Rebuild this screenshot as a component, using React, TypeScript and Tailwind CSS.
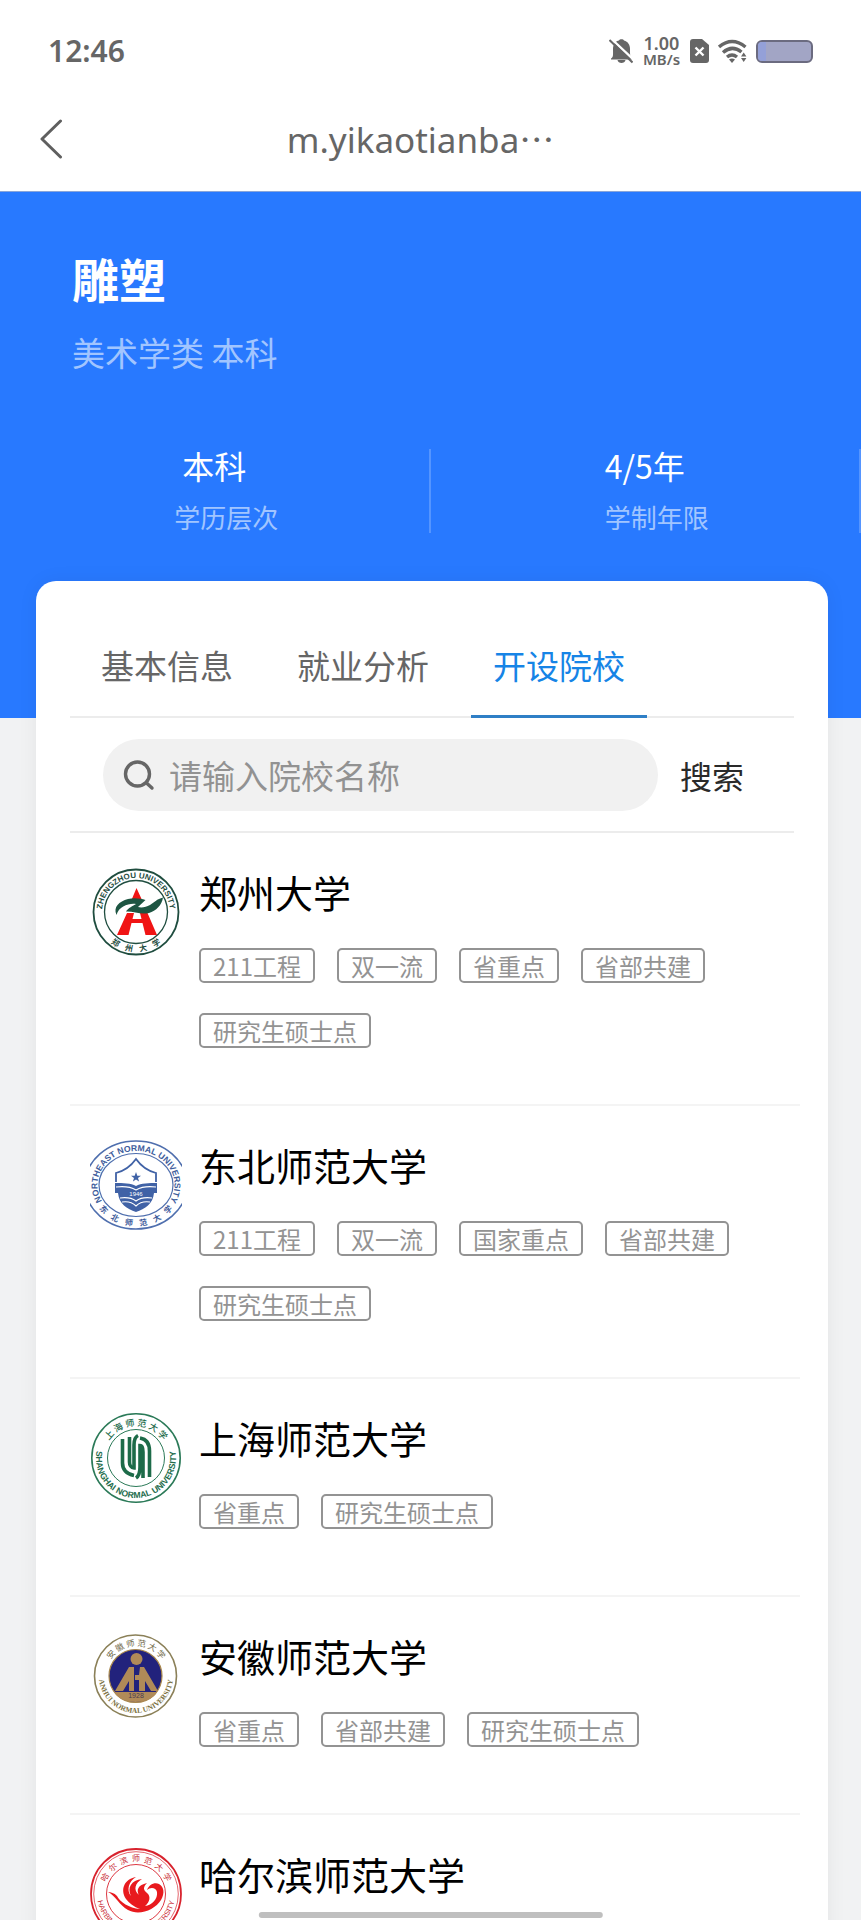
import type { ReactNode } from "react";

const cjk = "font-['Noto_Sans_CJK_SC',sans-serif]";

type ArcProps = {
  id: string;
  r: number;
  size: number;
  fill: string;
  children: string;
  bottom?: boolean;
  weight?: number;
  family?: string;
  ry?: number;
};

/* Text that runs along a circle centred in a 110-unit crest. */
function ArcText({ id, r, size, fill, children, bottom = false, weight = 400, family = "Liberation Sans, sans-serif", ry = r }: ArcProps) {
  const dx = r * 0.866;
  const dy = ry * 0.5;
  const d = bottom
    ? `M${55 - dx} ${55 - dy}A${r} ${ry} 0 1 0 ${55 + dx} ${55 - dy}`
    : `M${55 - dx} ${55 + dy}A${r} ${ry} 0 1 1 ${55 + dx} ${55 + dy}`;
  return (
    <>
      <path id={id} d={d} fill="none" />
      <text fontSize={size} fontWeight={weight} fill={fill} fontFamily={family} textAnchor="middle" className="whitespace-pre">
        <textPath href={`#${id}`} startOffset="50%">
          {children}
        </textPath>
      </text>
    </>
  );
}

function Crest({ label, children }: { label: string; children: ReactNode }) {
  return (
    <svg viewBox="9 9 92 92" className="size-[92px] shrink-0" role="img" aria-label={label}>
      {children}
    </svg>
  );
}

const kai = "Noto Sans CJK SC, sans-serif";

function ZhengzhouCrest() {
  return (
    <Crest label="郑州大学">
      <circle cx="55" cy="55" r="42.5" fill="#fff" stroke="#1f4d3f" strokeWidth="1.8" />
      <circle cx="55" cy="55" r="31.5" fill="none" stroke="#1f4d3f" strokeWidth="1.3" />
      <ArcText id="zz-en" r={34} size={8} weight={700} fill="#1f4d3f">ZHENGZHOU UNIVERSITY</ArcText>
      <ArcText id="zz-a" r={39.8} size={8} weight={700} fill="#1f4d3f" family={kai} bottom>郑    州    大    学</ArcText>
      <path d="M55.500 31L61 43H50.500ZM46 56H53L47.500 78H36ZM59 56H66.500L76 78H64.500ZM49 62H63V66H48Z" fill="#f01414" />
      <path d="M35.500 58C32 50 38 44.500 47 42C53 40.500 60 41.500 64.500 43L57 50C61 51 65 50 69 48C73 45.500 76 42 82 40.500C81 48 75 54 68 56C60 58 52 54 45 54.500C47 51 52 49 55 47C48 46 38 49 35.500 58Z" fill="#1d5542" />
    </Crest>
  );
}

function NortheastCrest() {
  return (
    <Crest label="东北师范大学">
      <ellipse cx="55" cy="55" rx="51" ry="44" fill="#fff" stroke="#4f6fae" strokeWidth="1.6" />
      <ellipse cx="55" cy="55" rx="37" ry="31.5" fill="none" stroke="#4f6fae" strokeWidth="1.2" />
      <ArcText id="ne-en" r={38.5} ry={34} size={8.6} weight={700} fill="#3d5c9b">NORTHEAST NORMAL UNIVERSITY</ArcText>
      <ArcText id="ne-a" r={45} ry={41} size={8} weight={700} fill="#3d5c9b" family={kai} bottom>东    北    师    范    大    学</ArcText>
      <path d="M35 52V43C43 41 50 36 55 29C60 36 67 41 75 43V52" fill="none" stroke="#4062a6" strokeWidth="1.8" />
      <path d="M55 42L56.300 45.800H60L57 48L58.100 51.500L55 49.400L51.900 51.500L53 48L50 45.800H53.700Z" fill="#4062a6" />
      <path d="M34 53C42 53 50 53 55 56C60 53 68 53 76 53V63H73C72 74 64 79 55 82C46 79 38 74 37 63H34Z" fill="#4062a6" />
      <path d="M35 57C43 56 50 57 55 60C60 57 67 56 75 57M39 68C46 67 51 68 55 71C59 68 64 67 71 68M41 72C47 71 52 73 55 76C58 73 63 71 69 72" fill="none" stroke="#fff" strokeWidth="1.1" />
      <text x="55" y="66" fontSize="6" fontFamily="Liberation Sans, sans-serif" fill="#fff" textAnchor="middle">1946</text>
    </Crest>
  );
}

function ShanghaiCrest() {
  return (
    <Crest label="上海师范大学">
      <circle cx="55" cy="55" r="44.2" fill="#fff" stroke="#2b7a58" strokeWidth="1.6" />
      <circle cx="55" cy="55" r="28.5" fill="none" stroke="#2b7a58" strokeWidth="1" />
      <ArcText id="sh-cn" r={32} size={9} weight={500} fill="#236c4c" family={kai}>上 海 师 范 大 学</ArcText>
      <ArcText id="sh-en" r={40} size={8.6} weight={700} fill="#236c4c" bottom>SHANGHAI NORMAL UNIVERSITY</ArcText>
      <path d="M41.500 36V60C41.500 67 46 71 53 72.500M48.500 34V59C48.500 62 50 65 53 65V42C53 37 54 34 57 32.500M68.500 74V48C68.500 40 65 36 59 35M62 75V49C62 45 61.500 42.500 59 42.500V64C59 69 58 73 55 75" fill="none" stroke="#1d6b49" strokeWidth="3.6" />
    </Crest>
  );
}

function AnhuiCrest() {
  return (
    <Crest label="安徽师范大学">
      <circle cx="54.5" cy="55" r="41" fill="#fff" stroke="#8b8058" strokeWidth="1.6" />
      <circle cx="54.5" cy="55" r="26.5" fill="#22227c" stroke="#a8874c" strokeWidth="1.2" />
      <ArcText id="ah-cn" r={30} size={8.4} fill="#6e6847" family={kai}>安 徽 师 范 大 学</ArcText>
      <ArcText id="ah-en" r={37} size={7.4} weight={700} fill="#7b7040" family="Liberation Serif, serif" bottom>ANHUI NORMAL UNIVERSITY</ArcText>
      <circle cx="55.5" cy="38" r="6" fill="#b08a58" />
      <path d="M48 46H53V70H48V60L42 70H34ZM59 46H63L77 70H70L64 60V70H58V59H54V54H58Z" fill="#b08a58" />
      <path d="M33 71H76C73 78 62 81 54.500 81C46 81 37 78 33 71Z" fill="#b08a58" />
      <text x="55" y="77" fontSize="7" fontFamily="Liberation Sans, sans-serif" fill="#4a3c50" textAnchor="middle">1928</text>
    </Crest>
  );
}

function HarbinCrest() {
  return (
    <Crest label="哈尔滨师范大学">
      <circle cx="55" cy="55" r="45" fill="#fff" stroke="#d8232e" strokeWidth="1.8" />
      <circle cx="55" cy="55" r="42.3" fill="none" stroke="#d8232e" strokeWidth="0.7" />
      <circle cx="55" cy="55" r="29.5" fill="none" stroke="#d8232e" strokeWidth="0.9" />
      <ArcText id="hb-cn" r={32.5} size={8} fill="#c92a34" family={kai}>哈  尔  滨  师  范  大  学</ArcText>
      <ArcText id="hb-en" r={39} size={7.4} fill="#c92a34" bottom>HARBIN NORMAL UNIVERSITY</ArcText>
      <path d="M27 53C34 56 38 66 47 71C58 77 74 71 80 61C84 54 83 48 78 45C73 43 68 46 66 51C69 48 75 48 76 53C77 60 71 66 64 67C69 63 70 57 66 54C62 51 62 48 66 44C57 46 55 51 58 56C52 51 54 44 61 40C50 41 46 49 50 57C45 51 48 42 55 38C43 40 39 51 45 60C48 64 53 68 59 70C48 69 39 63 36 57C33 54 30 53 27 53Z" fill="#e81a1e" />
      <circle cx="61" cy="60.5" r="6" fill="#e81a1e" />
    </Crest>
  );
}

const stats = [
  { value: "本科", label: "学历层次" },
  { value: "4/5年", label: "学制年限" },
];

const tabs = ["基本信息", "就业分析", "开设院校"];

const schools = [
  { name: "郑州大学", Logo: ZhengzhouCrest, tags: ["211工程", "双一流", "省重点", "省部共建", "研究生硕士点"] },
  { name: "东北师范大学", Logo: NortheastCrest, tags: ["211工程", "双一流", "国家重点", "省部共建", "研究生硕士点"] },
  { name: "上海师范大学", Logo: ShanghaiCrest, tags: ["省重点", "研究生硕士点"] },
  { name: "安徽师范大学", Logo: AnhuiCrest, tags: ["省重点", "省部共建", "研究生硕士点"] },
  { name: "哈尔滨师范大学", Logo: HarbinCrest, tags: [] },
];

function StatusBar() {
  return (
    <div className="flex h-[102px] items-center justify-between px-12 text-[#666]">
      <span className="font-['Noto_Sans',sans-serif] text-[30px] leading-8 font-semibold">12:46</span>
      <div className="flex items-center gap-[9px]">
        <svg viewBox="0 0 24 26" className="h-[26px] w-6" fill="#666" aria-hidden="true">
          <path d="M2 20.500C4.500 19 4 17 4 11C4 6 7 3 10 2.500C10.500 .8 14.500 .8 15 2.500C19 3.500 21 7 21 11C21 17 21 18.500 23 20.500V21.500H2ZM8.500 22H16.500C16 26 9 26 8.500 22Z" />
          <path d="M1.500 0L26 23" stroke="#fff" strokeWidth="2.2" />
          <path d="M.5 2L23.500 24.500" stroke="#666" strokeWidth="2" />
        </svg>
        <div className="flex w-[39px] flex-col items-center font-['Noto_Sans',sans-serif] font-semibold">
          <span className="text-lg leading-4">1.00</span>
          <span className="text-[15px] leading-4">MB/s</span>
        </div>
        <svg viewBox="0 0 19 24" className="h-6 w-[19px]" aria-hidden="true">
          <path d="M3 0H12L19 6V21Q19 24 16 24H3Q0 24 0 21V3Q0 0 3 0Z" fill="#666" />
          <path d="M5.500 8.500L13.500 16.500M13.500 8.500L5.500 16.500" stroke="#fff" strokeWidth="2.4" />
        </svg>
        <svg viewBox="0 0 29 24" className="h-6 w-[29px]" fill="none" stroke="#666" strokeWidth="3.4" aria-hidden="true">
          <path d="M1 8Q14 -3 27.500 8M5 13.500Q14 5.500 23.500 13M9 18Q14 14 19 18" />
          <path d="M11 20.500Q14 18.500 17 20.500L14 24Z" fill="#666" stroke="none" />
          <path d="M23 17.500L25.700 13.500L28.400 17.500ZM23 19L25.700 23L28.400 19Z" fill="#666" stroke="none" />
        </svg>
        <div className="h-[23px] w-[57px] overflow-hidden rounded-md border-2 border-[#6b6b80] bg-[#a2a5c5]">
          <div className="h-full w-2 bg-[#94a0d8]" />
        </div>
      </div>
    </div>
  );
}

export default function App() {
  return (
    <div className={`relative flex h-screen flex-col overflow-hidden bg-[#f1f2f3] ${cjk}`} lang="zh-CN">
      <header className="bg-white">
        <StatusBar />
        <div className="grid h-[89px] grid-cols-[92px_1fr_112px] items-center pb-4 text-[#666]">
          <a href="#back" aria-label="返回" className="pl-[38px]">
            <svg viewBox="0 0 26 40" className="h-10 w-[26px]" fill="none" stroke="#5f5f5f" strokeWidth="3" strokeLinecap="round" strokeLinejoin="round">
              <path d="M22.500 2L4 20L22.500 38" />
            </svg>
          </a>
          <h1 className="text-center font-['Noto_Sans','Noto_Sans_CJK_SC',sans-serif] text-[35px] leading-10">
            m.yikaotianba<span className={cjk}>⋯</span>
          </h1>
        </div>
      </header>

      <main className="min-h-0 flex-1 overflow-y-auto [scrollbar-width:none]">
        <section className="h-[527px] border-t border-[#8aa5d8] bg-[#2879ff] pt-14 text-white">
          <div className="px-[72px]">
            <h2 className="text-[47px] leading-[60px] font-bold">雕塑</h2>
            <p className="mt-6 text-[33px] leading-10 text-[#a1c5ff]">美术学类 本科</p>
          </div>
          <dl className="mt-[77px] grid grid-cols-2">
            {stats.map((s) => (
              <div key={s.label} className="flex h-[84px] flex-col-reverse justify-end border-r-2 border-[#5595ff] text-center">
                <dt className="mt-5 pl-6 text-[26px] leading-8 text-[#a1c5ff]">{s.label}</dt>
                <dd className="text-[32px] leading-8">{s.value}</dd>
              </div>
            ))}
          </dl>
        </section>

        <section className="relative mx-auto -mt-[137px] mr-[33px] ml-9 rounded-t-[20px] bg-white pt-[50px] shadow-[0_0_20px_rgba(0,0,0,0.06)]">
          <div className="mx-[34px] flex gap-5 border-b-2 border-[#ececec] pl-[9px]" role="tablist">
            {tabs.map((tab) => (
              <button
                key={tab}
                type="button"
                role="tab"
                aria-selected={tab === "开设院校"}
                className="-mb-[2px] h-[87px] border-b-3 border-transparent px-[22px] pb-[14px] text-[33px] text-[#666] aria-selected:border-[#2f7fc6] aria-selected:text-[#1684e6]"
              >
                {tab}
              </button>
            ))}
          </div>

          <form className="mx-[34px] flex items-center gap-[22px] border-b-2 border-[#ececec] pt-[21px] pr-[50px] pb-5 pl-[33px]" onSubmit={(e) => e.preventDefault()}>
            <label className="flex h-[72px] min-w-0 flex-1 items-center gap-[14px] rounded-full bg-[#f1f1f1] pl-5">
              <svg viewBox="0 0 32 32" className="size-8 shrink-0" fill="none" stroke="#666" strokeWidth="3.4" strokeLinecap="round" aria-hidden="true">
                <circle cx="14.5" cy="15" r="12" />
                <path d="M23.500 24L29 29" />
              </svg>
              <input
                type="search"
                aria-label="院校名称"
                placeholder="请输入院校名称"
                className="min-w-0 flex-1 bg-transparent text-[33px] leading-10 outline-none placeholder:text-[#929292]"
              />
            </label>
            <button type="submit" className="text-[32px] leading-10 text-[#2a2a2a]">
              搜索
            </button>
          </form>

          <ul className="pr-7 pl-[34px]">
            {schools.map(({ name, Logo, tags }) => (
              <li key={name} className="flex min-h-[218px] gap-[17px] border-b-2 border-[#f4f4f4] pt-[33px] pb-14 pl-5">
                <Logo />
                <div className="min-w-0 flex-1 pt-[6px]">
                  <h3 className="text-[38px] leading-10 text-black">{name}</h3>
                  <ul className="mt-9 flex flex-wrap gap-x-[22px] gap-y-[30px]">
                    {tags.map((tag) => (
                      <li key={tag} className="rounded-[5px] border-2 border-[#939393] px-3 text-2xl leading-[31px] text-[#939393]">
                        {tag}
                      </li>
                    ))}
                  </ul>
                </div>
              </li>
            ))}
          </ul>
        </section>
      </main>

      <div className="absolute bottom-[2px] left-1/2 h-[6px] w-2/5 -translate-x-1/2 rounded-full bg-[#bfbfbf]" />
    </div>
  );
}
